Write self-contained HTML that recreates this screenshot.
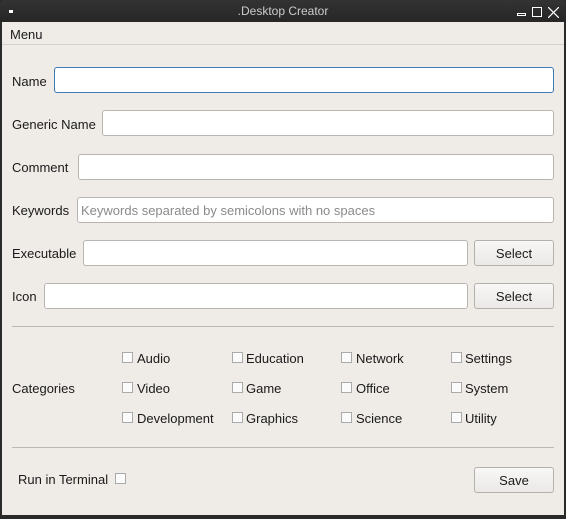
<!DOCTYPE html>
<html><head><style>
*{box-sizing:border-box;margin:0;padding:0}
body{width:566px;height:519px;overflow:hidden;background:#2a2a2a;font-family:"Liberation Sans",sans-serif;font-size:13px;color:#1a1a1a;position:relative}
#win{position:absolute;left:2px;top:22px;width:562px;height:493px;background:#efebe7}
#title{position:absolute;left:0;top:0;width:566px;height:22px;background:linear-gradient(#333,#262626);border-radius:4px 4px 0 0;color:#ccc;text-align:center;line-height:23px;font-size:12px}
.a{position:absolute}
.lbl{position:absolute;line-height:16px;margin-top:1px}
.in{position:absolute;background:#fff;border:1px solid #b8b4b0;border-radius:3px;height:26px}
.btn{position:absolute;background:linear-gradient(#f8f7f6,#ebe9e6);border:1px solid #b4b0ac;border-radius:3px;text-align:center;line-height:26px;height:26px;width:80px}
.cb{position:absolute;width:11px;height:11px;border:1px solid #aaa;background:#fbfbfb}
.sep{position:absolute;left:12px;width:542px;height:1px;background:#bcb8b4}
</style></head><body>
<div id="title">.Desktop Creator</div>
<div class="a" style="left:9px;top:10px;width:4px;height:3px;background:#fff"></div>
<div class="a" style="left:517px;top:13px;width:9px;height:3px;border:1px solid #fff"></div>
<div class="a" style="left:532px;top:7px;width:10px;height:10px;border:1.5px solid #fff"></div>
<svg class="a" style="left:548px;top:7px" width="11" height="11"><path d="M0 0L11 11M11 0L0 11" stroke="#fff" stroke-width="1.2"/></svg>
<div id="win"></div>
<div class="a" style="left:2px;top:44px;width:562px;height:1px;background:#d4d0cc"></div>
<div class="lbl" style="left:10px;top:26px">Menu</div>

<div class="lbl" style="left:12px;top:73px">Name</div>
<div class="in" style="left:54px;top:67px;width:500px;border-color:#3a7cb8"></div>
<div class="lbl" style="left:12px;top:116px">Generic Name</div>
<div class="in" style="left:102px;top:110px;width:452px"></div>
<div class="lbl" style="left:12px;top:159px">Comment</div>
<div class="in" style="left:78px;top:154px;width:476px"></div>
<div class="lbl" style="left:12px;top:202px">Keywords</div>
<div class="in" style="left:77px;top:197px;width:477px;color:#8a8a8a;padding-left:3px;line-height:26px">Keywords separated by semicolons with no spaces</div>
<div class="lbl" style="left:12px;top:245px">Executable</div>
<div class="in" style="left:83px;top:240px;width:385px"></div>
<div class="btn" style="left:474px;top:240px">Select</div>
<div class="lbl" style="left:12px;top:288px">Icon</div>
<div class="in" style="left:44px;top:283px;width:424px"></div>
<div class="btn" style="left:474px;top:283px">Select</div>
<div class="sep" style="top:326px"></div>

<div class="lbl" style="left:12px;top:380px">Categories</div>
<div class="cb" style="left:122px;top:352px"></div><div class="lbl" style="left:137px;top:350px">Audio</div>
<div class="cb" style="left:232px;top:352px"></div><div class="lbl" style="left:246px;top:350px">Education</div>
<div class="cb" style="left:341px;top:352px"></div><div class="lbl" style="left:356px;top:350px">Network</div>
<div class="cb" style="left:451px;top:352px"></div><div class="lbl" style="left:465px;top:350px">Settings</div>
<div class="cb" style="left:122px;top:382px"></div><div class="lbl" style="left:137px;top:380px">Video</div>
<div class="cb" style="left:232px;top:382px"></div><div class="lbl" style="left:246px;top:380px">Game</div>
<div class="cb" style="left:341px;top:382px"></div><div class="lbl" style="left:356px;top:380px">Office</div>
<div class="cb" style="left:451px;top:382px"></div><div class="lbl" style="left:465px;top:380px">System</div>
<div class="cb" style="left:122px;top:412px"></div><div class="lbl" style="left:137px;top:410px">Development</div>
<div class="cb" style="left:232px;top:412px"></div><div class="lbl" style="left:246px;top:410px">Graphics</div>
<div class="cb" style="left:341px;top:412px"></div><div class="lbl" style="left:356px;top:410px">Science</div>
<div class="cb" style="left:451px;top:412px"></div><div class="lbl" style="left:465px;top:410px">Utility</div>
<div class="sep" style="top:447px"></div>

<div class="lbl" style="left:18px;top:471px">Run in Terminal</div>
<div class="cb" style="left:115px;top:473px"></div>
<div class="btn" style="left:474px;top:467px">Save</div>
</body></html>
